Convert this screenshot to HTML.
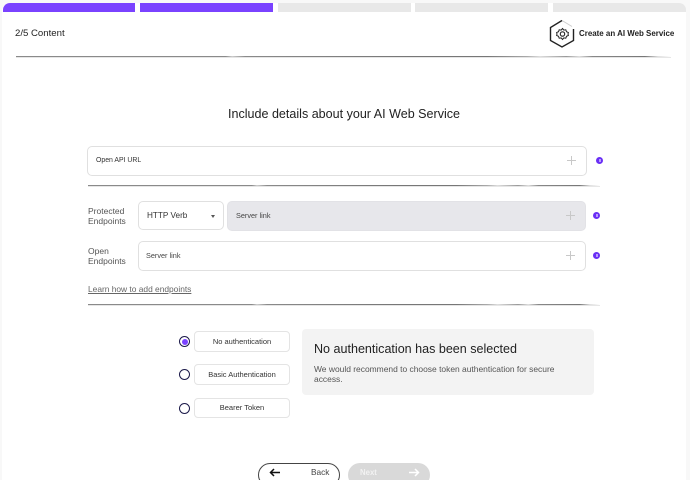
<!DOCTYPE html>
<html><head><meta charset="utf-8"><style>
html,body{margin:0;padding:0;width:690px;height:480px;overflow:hidden}
body{position:relative;background:#f8f8f8;font-family:"Liberation Sans",sans-serif;color:#222}
.a{position:absolute}
.t{position:absolute;white-space:nowrap}
.card{left:2px;top:3px;width:684px;height:477px;background:#fff;border-radius:8px 8px 0 0;overflow:hidden}
.seg{position:absolute;top:3px;height:9px}
.hr{position:absolute;height:1px;background:linear-gradient(90deg,#8a8a8a 0,#8a8a8a 32%,#ccc 33%,#8a8a8a 35%,#777 60%,#777 72%,#aaa 78%,#ddd 80%,#999 84%,#ddd 86%,#888 88%,#777 96%,#ddd 98%,#fff 100%);box-shadow:0 1px 0 #e6e6e6}
.box{position:absolute;box-sizing:border-box;border:1px solid #e0e0e0;border-radius:5px;background:#fff}
.plus{position:absolute;width:9px;height:9px}
.plus:before{content:"";position:absolute;left:4px;top:0;width:1.4px;height:9px;background:#c8c8c8}
.plus:after{content:"";position:absolute;left:0;top:4px;width:9px;height:1.4px;background:#c8c8c8}
.info{position:absolute;width:7px;height:7px;border-radius:50%;background:#6a2ff5}
.info:after{content:"";position:absolute;left:2.5px;top:2px;width:2px;height:3px;background:#b79cff}
.radio{position:absolute;box-sizing:border-box;width:11px;height:11px;border-radius:50%;border:1.5px solid #1c1a4a;background:#fff}
.btn{position:absolute;box-sizing:border-box;left:194px;width:96px;border:1px solid #e4e4e4;border-radius:4px;background:#fff;font-size:7.5px;color:#333;text-align:center}
</style></head><body>
<div class="a card"></div>
<div class="seg" style="left:3px;width:132px;background:#7a42ff;border-radius:7px 0 0 0"></div>
<div class="seg" style="left:140px;width:133px;background:#7a42ff"></div>
<div class="seg" style="left:278px;width:133px;background:#e8e8e8"></div>
<div class="seg" style="left:415px;width:133px;background:#e8e8e8"></div>
<div class="seg" style="left:553px;width:133px;background:#e8e8e8;border-radius:0 7px 0 0"></div>

<div class="t" style="left:15px;top:28px;font-size:9.6px;line-height:12px;color:#222">2/5 Content</div>
<svg class="a" style="left:548px;top:19px" width="30" height="30" viewBox="0 0 30 30" fill="none" stroke="#222">
<path d="M14 1.5 24 7.5" stroke="#ccc" stroke-width="1"/>
<path d="M14 1.5 2.5 8.5V21.5L14 28 25.5 21.5V10" stroke-width="1.4"/>
<circle cx="14.5" cy="15" r="2.2" stroke-width="1.1"/>
<path d="M14.5 9.5l1.3 1.6 2-.3.7 1.9 1.9.8-.4 1.5.4 1.5-1.9.8-.7 1.9-2-.3-1.3 1.6-1.3-1.6-2 .3-.7-1.9-1.9-.8.4-1.5-.4-1.5 1.9-.8.7-1.9 2 .3z" stroke-width="1"/>
</svg>
<div class="t" style="left:579px;top:28px;font-size:7.95px;line-height:12px;font-weight:bold;color:#222">Create an AI Web Service</div>
<div class="hr" style="left:16px;top:56px;width:655px"></div>

<div class="t" style="left:228px;top:106px;font-size:12.55px;line-height:16px;color:#222">Include details about your AI Web Service</div>

<div class="box" style="left:87px;top:146px;width:500px;height:30px"></div>
<div class="t" style="left:96px;top:155px;font-size:6.9px;line-height:11px;color:#333">Open API URL</div>
<div class="plus" style="left:567px;top:156px"></div>
<div class="info" style="left:596px;top:157px"></div>
<div class="hr" style="left:88px;top:185px;width:512px"></div>

<div class="t" style="left:88px;top:207px;font-size:8.5px;line-height:9.5px;color:#555">Protected<br>Endpoints</div>
<div class="box" style="left:138px;top:201px;width:86px;height:29px"></div>
<div class="t" style="left:147px;top:210px;font-size:8.2px;line-height:11px;color:#333">HTTP Verb</div>
<div class="a" style="left:211px;top:215px;width:0;height:0;border-left:2.5px solid transparent;border-right:2.5px solid transparent;border-top:3px solid #555"></div>
<div class="box" style="left:227px;top:201px;width:359px;height:30px;background:#e7e7eb;border-color:#e2e2e6"></div>
<div class="t" style="left:236px;top:210px;font-size:7.3px;line-height:11px;color:#444">Server link</div>
<div class="plus" style="left:566px;top:211px"></div>
<div class="info" style="left:593px;top:212px"></div>

<div class="t" style="left:88px;top:247px;font-size:8.5px;line-height:9.5px;color:#555">Open<br>Endpoints</div>
<div class="box" style="left:138px;top:241px;width:448px;height:30px"></div>
<div class="t" style="left:146px;top:250px;font-size:7.3px;line-height:11px;color:#444">Server link</div>
<div class="plus" style="left:566px;top:251px"></div>
<div class="info" style="left:593px;top:252px"></div>

<div class="t" style="left:88px;top:284px;font-size:8.4px;line-height:11px;color:#666;text-decoration:underline">Learn how to add endpoints</div>
<div class="hr" style="left:88px;top:304px;width:512px"></div>

<div class="radio" style="left:179px;top:336px"></div>
<div class="a" style="left:181.5px;top:338.5px;width:6px;height:6px;border-radius:50%;background:#7a42ff"></div>
<div class="btn" style="top:331px;height:21px;line-height:19px">No authentication</div>
<div class="radio" style="left:179px;top:369px"></div>
<div class="btn" style="top:364px;height:21px;line-height:19px">Basic Authentication</div>
<div class="radio" style="left:179px;top:403px"></div>
<div class="btn" style="top:398px;height:20px;line-height:18px">Bearer Token</div>

<div class="a" style="left:302px;top:329px;width:292px;height:66px;background:#f3f3f3;border-radius:4px"></div>
<div class="t" style="left:314px;top:342px;font-size:12.55px;line-height:15px;color:#222">No authentication has been selected</div>
<div class="t" style="left:314px;top:364px;font-size:8.45px;line-height:10px;color:#555">We would recommend to choose token authentication for secure<br>access.</div>

<div class="a" style="left:258px;top:463px;width:82px;height:24px;box-sizing:border-box;border:1px solid #444;border-radius:12px;background:#fff"></div>
<svg class="a" style="left:269px;top:468px" width="12" height="9" viewBox="0 0 12 9" fill="none" stroke="#111" stroke-width="1.5"><path d="M11 4.5H2M5 1 1.5 4.5 5 8"/></svg>
<div class="t" style="left:311px;top:467px;font-size:8.3px;line-height:11px;color:#444">Back</div>
<div class="a" style="left:348px;top:463px;width:82px;height:24px;border-radius:12px;background:#d9d9d9"></div>
<div class="t" style="left:360px;top:467px;font-size:7.8px;line-height:11px;color:#f2f2f2;font-weight:bold">Next</div>
<svg class="a" style="left:408px;top:468px" width="12" height="9" viewBox="0 0 12 9" fill="none" stroke="#fff" stroke-width="1.5"><path d="M1 4.5H10M7 1 10.5 4.5 7 8"/></svg>
</body></html>
